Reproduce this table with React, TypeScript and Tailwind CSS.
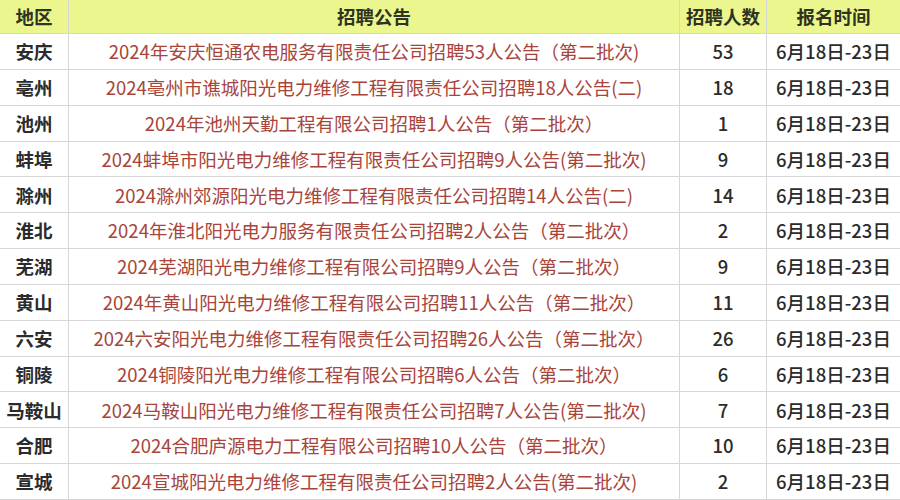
import React from "react";

const rows: [string, string, string][] = [
  ["安庆", "2024年安庆恒通农电服务有限责任公司招聘53人公告（第二批次)", "53"],
  ["亳州", "2024亳州市谯城阳光电力维修工程有限责任公司招聘18人公告(二)", "18"],
  ["池州", "2024年池州天勤工程有限公司招聘1人公告（第二批次）", "1"],
  ["蚌埠", "2024蚌埠市阳光电力维修工程有限责任公司招聘9人公告(第二批次)", "9"],
  ["滁州", "2024滁州郊源阳光电力维修工程有限责任公司招聘14人公告(二)", "14"],
  ["淮北", "2024年淮北阳光电力服务有限责任公司招聘2人公告（第二批次）", "2"],
  ["芜湖", "2024芜湖阳光电力维修工程有限公司招聘9人公告（第二批次）", "9"],
  ["黄山", "2024年黄山阳光电力维修工程有限公司招聘11人公告（第二批次）", "11"],
  ["六安", "2024六安阳光电力维修工程有限责任公司招聘26人公告（第二批次）", "26"],
  ["铜陵", "2024铜陵阳光电力维修工程有限公司招聘6人公告（第二批次）", "6"],
  ["马鞍山", "2024马鞍山阳光电力维修工程有限责任公司招聘7人公告(第二批次)", "7"],
  ["合肥", "2024合肥庐源电力工程有限公司招聘10人公告（第二批次）", "10"],
  ["宣城", "2024宣城阳光电力维修工程有限责任公司招聘2人公告(第二批次)", "2"],
];

const cell = "flex items-center justify-center border-b border-r border-[#d6d6d6] whitespace-nowrap overflow-hidden";

export default function App() {
  return (
    <div
      className="w-[900px] h-[500px] bg-white overflow-hidden"
      style={{ fontFamily: '"Noto Sans CJK SC", "Noto Sans", sans-serif' }}
    >
      <div className="grid h-full grid-cols-[69px_611px_87px_133px] grid-rows-[34px_repeat(13,1fr)] text-[18.5px] leading-none">
        {/* header */}
        <div className={`${cell} bg-[#ecf68e] font-bold text-[#2f3320]`}>地区</div>
        <div className={`${cell} bg-[#ecf68e] font-bold text-[#2f3320]`}>招聘公告</div>
        <div className={`${cell} bg-[#ecf68e] font-bold text-[#2f3320]`}>招聘人数</div>
        <div className={`${cell} bg-[#ecf68e] font-bold text-[#2f3320] border-r-0`}>报名时间</div>

        {rows.map(([area, title, count]) => (
          <React.Fragment key={area}>
            <div className={`${cell} font-semibold text-[#2b2b2b]`}>{area}</div>
            <div className={`${cell} text-[#a8443a]`}>{title}</div>
            <div className={`${cell} font-medium text-[#2b2b2b]`}>{count}</div>
            <div className={`${cell} font-medium text-[#2b2b2b] border-r-0`}>6月18日-23日</div>
          </React.Fragment>
        ))}
      </div>
    </div>
  );
}
